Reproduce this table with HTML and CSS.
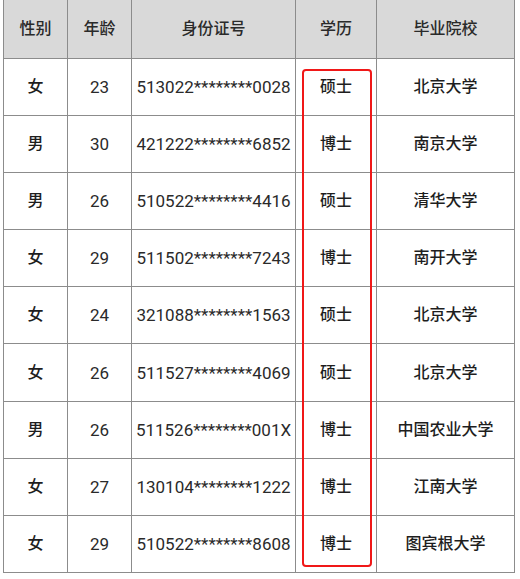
FILE: index.html
```html
<!DOCTYPE html>
<html lang="zh">
<head>
<meta charset="utf-8">
<link rel="stylesheet" href="styles.css">
</head>
<body>
<div class="wrap">
  <table class="grid">
    <colgroup>
      <col class="c1"><col class="c2"><col class="c3"><col class="c4"><col class="c5">
    </colgroup>
    <thead>
      <tr><th>性别</th><th>年龄</th><th>身份证号</th><th>学历</th><th>毕业院校</th></tr>
    </thead>
    <tbody>
      <tr><td>女</td><td class="num">23</td><td class="num">513022********0028</td><td>硕士</td><td>北京大学</td></tr>
      <tr><td>男</td><td class="num">30</td><td class="num">421222********6852</td><td>博士</td><td>南京大学</td></tr>
      <tr><td>男</td><td class="num">26</td><td class="num">510522********4416</td><td>硕士</td><td>清华大学</td></tr>
      <tr><td>女</td><td class="num">29</td><td class="num">511502********7243</td><td>博士</td><td>南开大学</td></tr>
      <tr><td>女</td><td class="num">24</td><td class="num">321088********1563</td><td>硕士</td><td>北京大学</td></tr>
      <tr><td>女</td><td class="num">26</td><td class="num">511527********4069</td><td>硕士</td><td>北京大学</td></tr>
      <tr><td>男</td><td class="num">26</td><td class="num">511526********001X</td><td>博士</td><td>中国农业大学</td></tr>
      <tr><td>女</td><td class="num">27</td><td class="num">130104********1222</td><td>博士</td><td>江南大学</td></tr>
      <tr><td>女</td><td class="num">29</td><td class="num">510522********8608</td><td>博士</td><td>图宾根大学</td></tr>
    </tbody>
  </table>
  <div class="highlight"></div>
</div>
</body>
</html>
```

FILE: styles.css
```css
html, body {
  margin: 0;
  padding: 0;
  background: #ffffff;
}
body {
  font-family: Roboto, "Noto Sans CJK SC", sans-serif;
  color: #222222;
}
.wrap {
  position: relative;
  width: 520px;
  height: 579px;
  overflow: hidden;
}
.grid {
  border-collapse: collapse;
  table-layout: fixed;
  margin-left: 3px;
  width: 511px;
}
.c1 { width: 64px; }
.c2 { width: 64px; }
.c3 { width: 164px; }
.c4 { width: 81px; }
.c5 { width: 138px; }
.grid th,
.grid td {
  border: 1.5px solid #8c8c8c;
  text-align: center;
  vertical-align: middle;
  padding: 0;
  font-size: 16px;
  line-height: 20px;
}
.grid thead tr { height: 58px; }
.grid tbody tr { height: 57.2px; }
.grid th {
  border-top: none;
  background: #d9d9d9;
  font-weight: 500;
  color: #2a2a2a;
}
.grid td {
  color: #1e1e1e;
  font-weight: 500;
}
.grid td.num {
  font-weight: 400;
  font-size: 17px;
  color: #2a2a2a;
}
.highlight {
  position: absolute;
  left: 302px;
  top: 69px;
  width: 66px;
  height: 494px;
  border: 2.5px solid #f01818;
  border-radius: 4px;
}
```
